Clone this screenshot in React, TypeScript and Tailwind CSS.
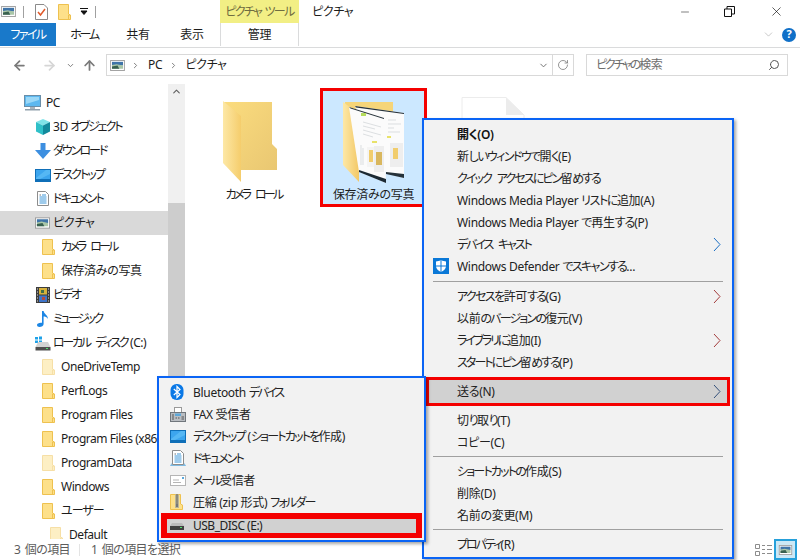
import React from 'react';
import { ChevronRight, ChevronDown, ArrowLeft, ArrowRight, ArrowUp, RotateCw, Search, Minus, X, ChevronUp } from 'lucide-react';

const PictureIcon = ({ w = 16, h = 12 }: { w?: number; h?: number }) => (
  <svg width={w} height={h} viewBox="0 0 16 12" className="shrink-0">
    <rect x="0.5" y="0.5" width="15" height="11" fill="#fff" stroke="#9b9b9b" />
    <rect x="2" y="2" width="12" height="4" fill="#3f74a8" />
    <path d="M2 5.5 L7 4.5 L14 6 V9.5 H2 Z" fill="#a9c6a8" />
    <path d="M2 7 L8 6 L10 9.5 H2 Z" fill="#38604f" />
  </svg>
);

const SmallFolder = ({ faded }: { faded?: boolean }) => (
  <svg width="13" height="16" viewBox="0 0 13 16" className={faded ? 'shrink-0 opacity-50' : 'shrink-0'}>
    <path d="M0.5 0.5 H10.5 V10 L12.5 11 V15.5 H0.5 Z" fill="#fde08a" stroke="#eec14f" />
    <path d="M10.5 15 V11 H12" fill="none" stroke="#eec14f" />
  </svg>
);

const PcIcon = () => (
  <svg width="17" height="16" viewBox="0 0 17 16" className="shrink-0">
    <rect x="0.5" y="0.5" width="16" height="11" fill="#5db8ef" stroke="#6a8ea8" />
    <path d="M2 2 H15 V5 L2 9 Z" fill="#9bd8f7" />
    <rect x="6" y="12" width="5" height="2" fill="#a9b4bc" />
    <rect x="1" y="14" width="15" height="1.5" fill="#8fa0ac" />
  </svg>
);

const CubeIcon = () => (
  <svg width="16" height="16" viewBox="0 0 16 16" className="shrink-0">
    <path d="M8 0 L15 3 L8 6.5 L1 3 Z" fill="#7fe3e8" />
    <path d="M1 3 L8 6.5 V16 L1 12.5 Z" fill="#2fc0c8" />
    <path d="M15 3 L8 6.5 V16 L15 12.5 Z" fill="#128a9c" />
  </svg>
);

const DownloadIcon = () => (
  <svg width="16" height="16" viewBox="0 0 16 16" className="shrink-0">
    <path d="M5.5 0 H10.5 V7 H16 L8 16 L0 7 H5.5 Z" fill="#3d8fe0" />
  </svg>
);

const DesktopIcon = () => (
  <svg width="16" height="13" viewBox="0 0 16 13" className="shrink-0">
    <rect width="16" height="13" fill="#0f6fb8" />
    <path d="M1 1 H15 V10 H1 Z" fill="#3ca5ee" />
    <path d="M15 1 V5 L5 10 H1 V9 L11 1 Z" fill="#55b7f4" />
  </svg>
);

const DocIcon = ({ stand }: { stand?: boolean }) => (
  <svg width="16" height="16" viewBox="0 0 16 16" className="shrink-0">
    {stand && <path d="M0.5 15.5 L2.5 13 H13.5 L15.5 15.5 Z" fill="#9fd0f0" stroke="#4ea3dc" strokeWidth="0.6" />}
    <path d="M2.5 0.5 H10.5 L13.5 3.5 V14.5 H2.5 Z" fill="#fff" stroke="#8d8d8d" />
    <path d="M7 4 H11 M4.5 6 H11.5 M4.5 8 H11.5 M4.5 10 H11.5 M4.5 12 H11.5" stroke="#3f97d8" strokeWidth="1" />
    <path d="M4.5 4 H6" stroke="#777" />
  </svg>
);

const VideoIcon = () => (
  <svg width="14" height="16" viewBox="0 0 14 16" className="shrink-0">
    <rect width="14" height="16" fill="#3c3c3c" />
    <rect x="3" y="1" width="8" height="6.5" fill="#d7b23c" />
    <rect x="3" y="8.5" width="8" height="6.5" fill="#3f74c8" />
    <rect x="5" y="3" width="3" height="3" fill="#3f6e48" />
    <rect x="6" y="10" width="3" height="3" fill="#b54a3c" />
    <path d="M1 2 H2 M1 5 H2 M1 8 H2 M1 11 H2 M1 14 H2 M12 2 H13 M12 5 H13 M12 8 H13 M12 11 H13 M12 14 H13" stroke="#ddd" />
  </svg>
);

const MusicIcon = () => (
  <svg width="12" height="16" viewBox="0 0 12 16" className="shrink-0">
    <path d="M5 0 H6.6 C7 3 11 4 11 8 C10 6 8 5.5 6.6 5.5 V13 C6.6 15 4.5 16 2.5 16 C1 16 0 15 0 14 C0 12.5 2 11.5 5 11.8 Z" fill="#1c86e4" />
  </svg>
);

const DiskIcon = () => (
  <svg width="16" height="15" viewBox="0 0 16 15" className="shrink-0">
    <path d="M0 1 H3 V3.5 H0 Z M4 0.5 H7 V3.5 H4 Z M0 4.5 H3 V7 H0 Z M4 4.5 H7 V7.5 H4 Z" fill="#1ea1e8" />
    <path d="M3 6 H13 L15.5 11 H0.5 Z" fill="#d3d3d3" />
    <path d="M0.5 11 H15.5 V14.5 H0.5 Z" fill="#4f4f4f" />
    <rect x="11" y="12" width="2" height="1" fill="#4fe06a" />
  </svg>
);

const UsbIcon = () => (
  <svg width="14" height="7" viewBox="0 0 14 7" className="shrink-0">
    <path d="M2 0 H12 L14 3 H0 Z" fill="#b9b9b9" />
    <rect y="3" width="14" height="4" fill="#3f3f3f" />
    <rect x="10" y="4" width="2" height="1" fill="#4fe06a" />
  </svg>
);

const BluetoothIcon = () => (
  <svg width="14" height="16" viewBox="0 0 14 16" className="shrink-0">
    <rect x="0.5" width="13" height="16" rx="6" fill="#0a78e6" />
    <path d="M3.8 5 L10 10.5 L7 13.5 V2.5 L10 5.5 L3.8 11" fill="none" stroke="#fff" strokeWidth="1.2" />
  </svg>
);

const FaxIcon = () => (
  <svg width="16" height="15" viewBox="0 0 16 15" className="shrink-0">
    <rect x="4.5" y="0.5" width="7" height="5" fill="#fff" stroke="#9a9a9a" />
    <rect x="0.5" y="5.5" width="15" height="9" fill="#b9bdc2" stroke="#70767c" />
    <rect x="5" y="6.5" width="6" height="2.5" fill="#5ea7d8" />
    <path d="M2 8 H4 M2 10 H4 M2 12 H4 M5.5 11 H7 M8 11 H9.5 M11.5 10 H14 M11.5 12 H14" stroke="#555" />
  </svg>
);

const MailIcon = () => (
  <svg width="16" height="11" viewBox="0 0 16 11" className="shrink-0">
    <rect x="0.5" y="0.5" width="15" height="10" fill="#fff" stroke="#b5b5b5" />
    <path d="M3 5 H9 M3 7.5 H11" stroke="#b5b5b5" />
    <rect x="12" y="2" width="2" height="2" fill="#5aa8dc" />
  </svg>
);

const ZipIcon = () => (
  <svg width="13" height="16" viewBox="0 0 13 16" className="shrink-0">
    <path d="M0.5 0.5 H10.5 V10 L12.5 11 V15.5 H0.5 Z" fill="#fde08a" stroke="#eec14f" />
    <path d="M5 0.5 H9 V14 H5 Z" fill="#b9b59b" />
    <path d="M6 1 H8 M6 3 H8 M6 5 H8 M6 7 H8 M6 9 H8" stroke="#5f5f5f" />
    <rect x="6" y="10" width="2" height="3" fill="#777" />
  </svg>
);

const ShieldIcon = () => (
  <svg width="16" height="16" viewBox="0 0 16 16" className="shrink-0">
    <rect width="16" height="16" fill="#0a78d7" />
    <path d="M8 2 C6 3 4.5 3.4 3 3.4 V8 C3 11 5.5 13 8 14 C10.5 13 13 11 13 8 V3.4 C11.5 3.4 10 3 8 2 Z" fill="#fff" />
    <path d="M7.5 2 H8.5 V14 H7.5 Z M3 7.5 H13 V8.5 H3 Z" fill="#0a78d7" />
  </svg>
);

const BigFolder = () => (
  <svg width="60" height="86" viewBox="220 98 60 86" className="-ml-[7px] shrink-0">
    <defs>
      <linearGradient id="fb" x1="0" y1="0" x2="1" y2="1">
        <stop offset="0" stopColor="#fbdc7e" />
        <stop offset="1" stopColor="#e9c772" />
      </linearGradient>
      <linearGradient id="ff" x1="0" y1="0" x2="1" y2="0">
        <stop offset="0" stopColor="#fde8a6" />
        <stop offset="1" stopColor="#f5cd6c" />
      </linearGradient>
    </defs>
    <path d="M224 102 H272 V144 L277 149 V170 H240 Z" fill="url(#fb)" />
    <path d="M223 101 L241 116 V182 L223 163 Z" fill="url(#ff)" />
  </svg>
);

const PhotoFolder = () => (
  <svg width="70" height="86" viewBox="338 98 70 86" className="shrink-0">
    <defs>
      <linearGradient id="pf" x1="0" y1="0" x2="1" y2="0">
        <stop offset="0" stopColor="#fde8a6" />
        <stop offset="1" stopColor="#f3c866" />
      </linearGradient>
    </defs>
    <path d="M344 102 H392 V170 H350 Z" fill="#f6d579" />
    <path d="M342 102 L358 114 V182 L342 165 Z" fill="url(#pf)" />
    <path d="M354 106 L403 113 V178 L385 173 Z" fill="#fbfbfb" />
    <path d="M354 106 L403 113 V114 L355 107.5 Z" fill="#26323a" />
    <path d="M385 172 L403 174 V178 L385 174 Z" fill="#26323a" />
    <rect x="389" y="143" width="13" height="24" fill="#eeeeee" />
    <rect x="392" y="148" width="5" height="11" fill="#f1cd6d" />
    <rect x="386" y="136" width="4" height="2" fill="#e8e26a" />
    <path d="M387 120 H395 M387 124 H400 M387 128 H393 M387 132 H399" stroke="#cfd3d6" strokeWidth="0.7" />
    <path d="M348 107 L383 118 L385 183 L358 172 Z" fill="#fbfbfb" />
    <path d="M348 107 L383 118 V119 L349.5 108.5 Z" fill="#26323a" />
    <path d="M358 170 L385 179 V183 L358 172 Z" fill="#1c2a34" />
    <rect x="360" y="113" width="5" height="3" fill="#b5dc5c" />
    <rect x="371" y="141" width="5" height="2" fill="#e8e26a" />
    <rect x="373" y="146" width="10" height="26" fill="#eeeeee" />
    <rect x="375" y="152" width="6" height="13" fill="#d9b75e" />
    <rect x="366" y="147" width="7" height="20" fill="#f4f4f4" />
    <rect x="368" y="150" width="4" height="12" fill="#f1cd6d" />
    <path d="M362 122 L380 127 M362 126 L374 129 M362 130 L380 135 M362 134 L372 137 M360 145 V165 M362 148 V165" stroke="#cfd3d6" strokeWidth="0.7" />
  </svg>
);

// kana runs get squeezed to the narrower UI font widths, latin and kanji stay as they are
const Jp = ({ text, t }: { text: string; t?: string }) => (
  <>
    {text.split(/([\u3040-\u30ff]+)/).map((s, i) => {
      if (i % 2) return <span key={i} className={t}>{s}</span>;
      // a lone space between kana loses its width to the negative tracking
      if (s === ' ') return <span key={i} className="[word-spacing:3px]">{s}</span>;
      return s;
    })}
  </>
);

const TreeRow = ({ level, icon, label, active, t }: { level: number; icon: React.ReactNode; label: string; active?: boolean; t?: string }) => {
  const pad = level === 0 ? 'pl-[24px] gap-[5px]' : level === 1 ? 'pl-[32px]' : level === 2 ? 'pl-[42px]' : 'pl-[50px]';
  return (
    <div className={`h-6 flex items-center whitespace-nowrap shrink-0 ${pad} ${active ? 'bg-[#d9d9d9]' : ''}`}>
      <div className={level === 0 ? 'flex items-center' : level === 1 ? 'w-[21px] flex items-center justify-center' : 'w-[19px] flex items-center'}>{icon}</div>
      <span><Jp text={label} t={t} /></span>
    </div>
  );
};

const MenuArrow = ({ color, className }: { color: string; className: string }) => (
  <svg width="8" height="15" viewBox="0 0 8 15" className={`absolute ${className}`}>
    <path d="M1 1 L7 7.5 L1 14" fill="none" stroke={color} strokeWidth="1" />
  </svg>
);

const MenuItem = ({ label, arrow, icon, bold, t }: { label: string; arrow?: string; icon?: React.ReactNode; bold?: boolean; t?: string }) => (
  <div className="h-[22px] flex items-center relative pl-[33px] shrink-0">
    {icon && <div className="absolute left-[9px] top-[3px]">{icon}</div>}
    <span className={`mt-[2px] ${bold ? 'font-semibold text-[#111]' : ''}`}><Jp text={label} t={t} /></span>
    {arrow && <MenuArrow color={arrow} className="right-[11px] top-[4px]" />}
  </div>
);

const Sep = ({ short }: { short?: boolean }) => (
  <div className={`${short ? 'h-[7px]' : 'h-[8px]'} flex items-center px-[9px] shrink-0`}>
    <div className="h-px w-full bg-[#a0a0a0]" />
  </div>
);

const SendRow = ({ icon, label, t }: { icon: React.ReactNode; label: string; t?: string }) => (
  <div className="h-[22px] flex items-center shrink-0 pl-[11px]">
    <div className="w-[23px] flex items-center">{icon}</div>
    <span className="mt-[2px]"><Jp text={label} t={t} /></span>
  </div>
);

export default function App() {
  return (
    <div className="relative w-[800px] h-[560px] overflow-hidden bg-white text-[12px] text-[#1c1c1c] flex flex-col font-['Noto_Sans','Noto_Sans_CJK_JP',sans-serif] [font-feature-settings:'palt'] tracking-[-0.3px]">
      {/* title row */}
      <div className="h-[23px] flex shrink-0">
        <div className="w-[220px] flex items-center">
          <div className="ml-px w-[22px]"><PictureIcon w={15} h={11} /></div>
          <div className="w-px h-[12px] bg-[#a0a0a0]" />
          <svg width="13" height="16" viewBox="0 0 13 16" className="ml-[11px]">
            <path d="M0.5 0.5 H9 L12.5 4 V15.5 H0.5 Z" fill="#fff" stroke="#8a8a8a" />
            <path d="M3 8 L5.5 11 L10 5" fill="none" stroke="#e0592a" strokeWidth="1.5" />
          </svg>
          <div className="ml-[10px]"><SmallFolder /></div>
          <svg width="8" height="7" viewBox="0 0 8 7" className="ml-[9px]">
            <path d="M0 0.5 H8 M1 3 H7 L4 6.5 Z" stroke="#111" fill="#111" strokeWidth="1" />
          </svg>
          <div className="w-px h-[12px] bg-[#a0a0a0] ml-[7px]" />
        </div>
        <div className="w-[79px] bg-[#f2ef85] flex items-center justify-center text-[#6f6c40] whitespace-nowrap tracking-[-1.7px] [word-spacing:2px]">ピクチャ ツール</div>
        <div className="ml-[13px] flex items-center">ピクチャ</div>
        <div className="ml-auto flex items-center">
          <Minus size={12} strokeWidth={1} className="text-black" />
          <svg width="11" height="11" viewBox="0 0 11 11" className="ml-[33px]">
            <path d="M0.5 3 H7.5 V10.5 H0.5 Z M3 3 V0.5 H10.5 V8 H7.5" fill="none" stroke="#111" />
          </svg>
          <X size={15} strokeWidth={1} className="ml-[34px] mr-[16px] text-black" />
        </div>
      </div>

      {/* ribbon tabs */}
      <div className="h-[25px] flex shrink-0 border-b border-[#dadbdc]">
        <div className="w-[56px] h-[23px] bg-[#1979ca] text-white flex items-center justify-center pt-px tracking-[-1.6px]">ファイル</div>
        <div className="w-[56px] flex items-center justify-center h-[23px] pt-px tracking-[-2.2px]">ホーム</div>
        <div className="w-[52px] flex items-center justify-center h-[23px] pt-px">共有</div>
        <div className="w-[56px] flex items-center justify-center h-[23px] pt-px">表示</div>
        <div className="w-[79px] flex items-center justify-center border-x border-[#dadbdc] h-[23px] pt-px">管理</div>
        <div className="ml-auto flex items-center h-[23px] pr-[4px]">
          <ChevronDown size={13} strokeWidth={1} className="text-[#9a9a9a]" />
          <div className="ml-[7px] w-[14px] h-[14px] rounded-full bg-[#1070c8] text-white text-[11px] font-bold flex items-center justify-center">?</div>
        </div>
      </div>

      {/* address row */}
      <div className="h-[36px] flex items-start pt-[6px] shrink-0">
        <div className="w-[106px] h-[22px] flex items-center">
          <ArrowLeft size={15} strokeWidth={2.8} className="ml-[12px] text-[#7a7a7a]" />
          <ArrowRight size={15} strokeWidth={2.8} className="ml-[15px] text-[#d6d6d6]" />
          <ChevronDown size={9} strokeWidth={2.5} className="ml-[9px] text-[#7a7a7a]" />
          <ArrowUp size={15} strokeWidth={2.8} className="ml-[7px] text-[#7a7a7a]" />
        </div>
        <div className="w-[468px] h-[22px] border border-[#d9d9d9] flex items-center">
          <div className="ml-[3px]"><PictureIcon w={15} h={11} /></div>
          <ChevronRight size={9} strokeWidth={2.5} className="ml-[6px] text-[#7a7a7a]" />
          <span className="ml-[8px]">PC</span>
          <ChevronRight size={9} strokeWidth={2.5} className="ml-[7px] text-[#7a7a7a]" />
          <span className="ml-[7px]">ピクチャ</span>
          <ChevronDown size={11} strokeWidth={2} className="ml-auto mr-[2px] text-[#6a6a6a]" />
          <div className="w-px h-full bg-[#d9d9d9] ml-[1px]" />
          <RotateCw size={12} strokeWidth={1.6} className="mx-[4px] text-[#7a7a7a]" />
        </div>
        <div className="ml-[12px] w-[202px] h-[22px] border border-[#d9d9d9] flex items-center pl-[9px] text-[#6d6d6d]">
          <span><Jp text="ピクチャの検索" t="tracking-[-2.2px]" /></span>
          <Search size={12} strokeWidth={2} className="ml-auto mr-[7px] text-[#555] -scale-x-100" />
        </div>
      </div>

      {/* main */}
      <div className="flex flex-1 min-h-0">
        <div className="w-[168px] pt-[7px] flex flex-col overflow-hidden shrink-0 tracking-[-0.45px]">
          <TreeRow level={0} icon={<PcIcon />} label="PC" />
          <TreeRow level={1} icon={<CubeIcon />} label="3D オブジェクト" t="tracking-[-2px]" />
          <TreeRow level={1} icon={<DownloadIcon />} label="ダウンロード" t="tracking-[-2px]" />
          <TreeRow level={1} icon={<DesktopIcon />} label="デスクトップ" t="tracking-[-1.9px]" />
          <TreeRow level={1} icon={<DocIcon />} label="ドキュメント" t="tracking-[-1.9px]" />
          <TreeRow level={1} icon={<PictureIcon w={15} h={12} />} label="ピクチャ" active t="tracking-[-0.2px]" />
          <TreeRow level={2} icon={<SmallFolder />} label="カメラ ロール" t="tracking-[-2.8px]" />
          <TreeRow level={2} icon={<SmallFolder />} label="保存済みの写真" t="tracking-[-0.2px]" />
          <TreeRow level={1} icon={<VideoIcon />} label="ビデオ" t="tracking-[-2.2px]" />
          <TreeRow level={1} icon={<MusicIcon />} label="ミュージック" t="tracking-[-2.5px]" />
          <TreeRow level={1} icon={<DiskIcon />} label="ローカル ディスク (C:)" t="tracking-[-2.3px]" />
          <TreeRow level={2} icon={<SmallFolder faded />} label="OneDriveTemp" />
          <TreeRow level={2} icon={<SmallFolder />} label="PerfLogs" />
          <TreeRow level={2} icon={<SmallFolder />} label="Program Files" />
          <TreeRow level={2} icon={<SmallFolder />} label="Program Files (x86)" />
          <TreeRow level={2} icon={<SmallFolder faded />} label="ProgramData" />
          <TreeRow level={2} icon={<SmallFolder />} label="Windows" />
          <TreeRow level={2} icon={<SmallFolder />} label="ユーザー" t="tracking-[-1px]" />
          <TreeRow level={3} icon={<SmallFolder faded />} label="Default" />
        </div>

        <div className="w-[17px] shrink-0 bg-[#f0f0f0] flex flex-col">
          <div className="h-[119px] flex justify-center pt-[2px]">
            <ChevronUp size={11} strokeWidth={2.5} className="text-[#606060]" />
          </div>
          <div className="flex-1 bg-[#cdcdcd]" />
        </div>

        <div className="flex-1 flex items-start gap-[13px] pl-[15px] pt-[4px]">
          <div className="w-[107px] h-[119px] border-[3px] border-transparent flex flex-col items-center pt-[7px]">
            <BigFolder />
            <div className="h-[20px] mt-px shrink-0 flex items-center whitespace-nowrap"><span><Jp text="カメラ ロール" t="tracking-[-2.8px]" /></span></div>
          </div>
          <div className="w-[107px] h-[119px] border-[3px] border-[#f40000] bg-[#cce8ff] flex flex-col items-center pt-[7px]">
            <PhotoFolder />
            <div className="h-[20px] mt-px shrink-0 flex items-center whitespace-nowrap">保存済みの写真</div>
          </div>
          <div className="w-[107px] h-[119px] flex flex-col items-center pt-[9px]">
            <svg width="65" height="30" viewBox="0 0 65 30" className="shrink-0">
              <path d="M1 0.5 H45 L63 18 V30 H1 Z" fill="#fff" stroke="#ececec" />
              <path d="M45 0.5 V18 H63 Z" fill="#ececec" />
            </svg>
          </div>
        </div>
      </div>

      {/* status bar */}
      <div className="h-[21px] flex items-center shrink-0 bg-white text-[#5c5c5c] relative tracking-[-0.6px] [word-spacing:2px]">
        <span className="ml-[14px] w-[65px]">3 個の項目</span>
        <div className="w-px h-[12px] bg-[#e4e4e4]" />
        <span className="ml-[11px]">1 個の項目を選択</span>
        <div className="ml-auto flex items-center mr-[3px]">
          <svg width="17" height="12" viewBox="0 0 17 12">
            <path d="M0.5 0.5 H4.5 V4.5 H0.5 Z M0.5 7.5 H4.5 V11.5 H0.5 Z" fill="#fff" stroke="#8c8c8c" />
            <path d="M7 1.5 H10 M12 1.5 H17 M7 5.5 H10 M12 5.5 H17 M7 9.5 H10 M12 9.5 H17" stroke="#8c8c8c" />
          </svg>
          <div className="ml-[2px] w-[23px] h-[21px] border-2 border-[#26a0da] bg-[#cbe8f6] flex items-center justify-center">
            <PictureIcon w={15} h={10} />
          </div>
        </div>
      </div>

      {/* context menu */}
      <div className="absolute left-[422px] top-[118px] w-[312px] h-[441px] bg-[#f2f2f2] border-2 border-[#0a64f5] shadow-[2px_2px_3px_rgba(0,0,0,0.35)] pt-[3px] flex flex-col text-[#222]">
        <MenuItem label="開く(O)" bold />
        <MenuItem label="新しいウィンドウで開く(E)" t="tracking-[-1.6px]" />
        <MenuItem label="クイック アクセスにピン留めする" t="tracking-[-1.9px]" />
        <MenuItem label="Windows Media Player リストに追加(A)" t="tracking-[-1.4px]" />
        <MenuItem label="Windows Media Player で再生する(P)" t="tracking-[-1px]" />
        <MenuItem label="デバイス キャスト" arrow="#1b6fc4" t="tracking-[-2.1px]" />
        <MenuItem label="Windows Defender でスキャンする..." icon={<ShieldIcon />} t="tracking-[-1.6px]" />
        <Sep />
        <MenuItem label="アクセスを許可する(G)" arrow="#a33b3b" t="tracking-[-1.6px]" />
        <MenuItem label="以前のバージョンの復元(V)" t="tracking-[-1.8px]" />
        <MenuItem label="ライブラリに追加(I)" arrow="#a33b3b" t="tracking-[-2.2px]" />
        <MenuItem label="スタートにピン留めする(P)" t="tracking-[-1.9px]" />
        <div className="mt-[4px] mx-[2px] h-[29px] border-[3px] border-[#f40000] bg-[#d1d1d1] relative flex items-center pl-[28px] shrink-0">
          <span className="mt-[1px]">送る(N)</span>
          <MenuArrow color="#33507a" className="right-[6px] top-[4px]" />
        </div>
        <div className="h-[3px] shrink-0" />
        <MenuItem label="切り取り(T)" t="tracking-[-1.7px]" />
        <MenuItem label="コピー(C)" />
        <Sep short />
        <MenuItem label="ショートカットの作成(S)" t="tracking-[-1.8px]" />
        <MenuItem label="削除(D)" />
        <MenuItem label="名前の変更(M)" />
        <Sep short />
        <MenuItem label="プロパティ(R)" t="tracking-[-2px]" />
      </div>

      {/* send to submenu */}
      <div className="absolute left-[157px] top-[376px] w-[269px] h-[166px] bg-[#f2f2f2] border-2 border-[#0a64f5] shadow-[2px_2px_3px_rgba(0,0,0,0.35)] pt-[3px] flex flex-col text-[#222]">
        <SendRow icon={<BluetoothIcon />} label="Bluetooth デバイス" t="tracking-[-2.4px]" />
        <SendRow icon={<FaxIcon />} label="FAX 受信者" />
        <SendRow icon={<DesktopIcon />} label="デスクトップ (ショートカットを作成)" t="tracking-[-1.8px]" />
        <SendRow icon={<DocIcon stand />} label="ドキュメント" t="tracking-[-1.9px]" />
        <SendRow icon={<MailIcon />} label="メール受信者" t="tracking-[-2.2px]" />
        <SendRow icon={<ZipIcon />} label="圧縮 (zip 形式) フォルダー" t="tracking-[-1.8px]" />
        <div className="mx-[2px] h-[25px] border-x-[6px] border-t-[6px] border-b-[5px] border-[#f40000] bg-[#d1d1d1] flex items-center pl-[3px] shrink-0">
          <div className="w-[23px] flex items-center"><UsbIcon /></div>
          <span className="tracking-[-0.5px]">USB_DISC (E:)</span>
        </div>
      </div>
    </div>
  );
}
